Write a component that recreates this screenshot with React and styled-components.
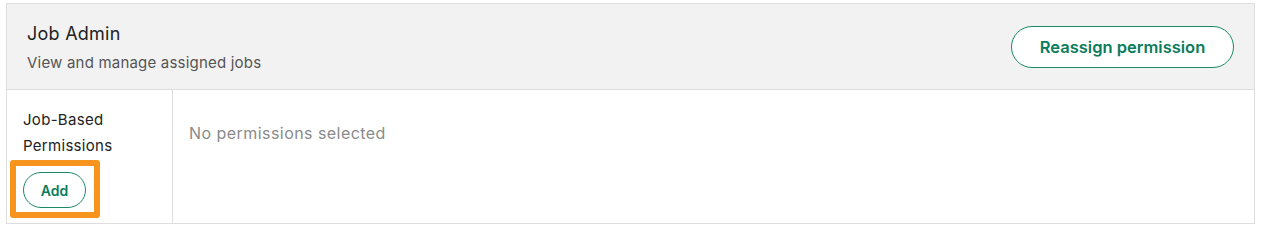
import React from 'react'
import styled, { createGlobalStyle } from 'styled-components'

const GlobalStyle = createGlobalStyle`
    body {
        margin: 0;
        background: #fff;
        font-family: 'Inter', 'Liberation Sans', sans-serif;
        color: #2b2b2b;
    }
`

const Page = styled.div`
    padding: 3px 0 0 6px;
`

const Panel = styled.section`
    width: 1249px;
    box-sizing: border-box;
    border: 1px solid #dedede;
    border-bottom: none;
`

const Header = styled.header`
    display: flex;
    align-items: center;
    justify-content: space-between;
    height: 85px;
    padding: 0 20px 0 20px;
    background: #f2f2f2;
    border-bottom: 1px solid #dedede;
`

const Titles = styled.div`
    display: flex;
    flex-direction: column;
    gap: 8px;
    padding-top: 2px;
`

const Title = styled.h2`
    margin: 0;
    font-size: 18px;
    font-weight: 400;
    letter-spacing: 0.25px;
    line-height: 22px;
    color: #222;
`

const Subtitle = styled.p`
    margin: 0;
    font-size: 15px;
    letter-spacing: 0.2px;
    line-height: 20px;
    color: #555;
`

const PillButton = styled.button`
    font-family: inherit;
    font-weight: 600;
    font-size: ${({ small }) => small ? '14px' : '16.5px'};
    color: #0a7c5b;
    background: #fff;
    border: 1px solid #1a8a66;
    border-radius: 999px;
    height: ${({ small }) => small ? '36px' : '42px'};
    padding: 0;
    width: ${({ width }) => width};
    cursor: pointer;
`

const Row = styled.div`
    display: grid;
    grid-template-columns: 166px 1fr;
    height: 134px;
    box-sizing: border-box;
    border-bottom: 1px solid #dedede;
`

const LabelCell = styled.div`
    padding: 17px 0 0 16px;
    border-right: 1px solid #dedede;
`

const Label = styled.div`
    font-size: 15px;
    letter-spacing: 0.3px;
    line-height: 26px;
    color: #222;
`

const Highlight = styled.div`
    display: inline-block;
    margin: 1px 0 0 -13px;
    padding: 6px 8px 4px 7px;
    border: 6px solid #f7941d;
    border-radius: 3px;
    line-height: 0;
`

const ValueCell = styled.div`
    padding: 33px 16px 0 16px;
    font-size: 16px;
    letter-spacing: 0.45px;
    line-height: 20px;
    color: #8a8a8a;
`

export default function App() {
    return (
        <Page>
            <GlobalStyle />
            <Panel>
                <Header>
                    <Titles>
                        <Title>Job Admin</Title>
                        <Subtitle>View and manage assigned jobs</Subtitle>
                    </Titles>
                    <PillButton width="223px">Reassign permission</PillButton>
                </Header>
                <Row>
                    <LabelCell>
                        <Label>Job-Based<br />Permissions</Label>
                        <Highlight>
                            <PillButton small width="63px">Add</PillButton>
                        </Highlight>
                    </LabelCell>
                    <ValueCell>No permissions selected</ValueCell>
                </Row>
            </Panel>
        </Page>
    )
}
